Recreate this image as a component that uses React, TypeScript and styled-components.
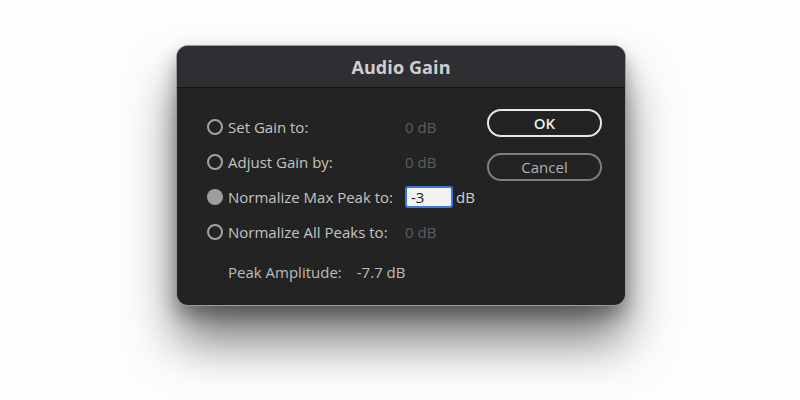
import React from "react";
import styled, { createGlobalStyle } from "styled-components";

const Global = createGlobalStyle`
  html, body { margin: 0; padding: 0; background: #ffffff; }
  body { width: 800px; height: 400px; overflow: hidden; font-family: "Open Sans", "Noto Sans", sans-serif; }
`;

const Page = styled.div`
  width: 800px;
  height: 400px;
  display: flex;
  justify-content: center;
  padding-top: 46px;
  box-sizing: border-box;
  background: #fdfdfd;
`;

const Dialog = styled.div`
  width: 448px;
  height: 259px;
  margin-left: 2px;
  border-radius: 11px;
  background: #232323;
  box-shadow: 0 0 0 1px #9a9a9a, 0 36px 50px rgba(0, 0, 0, 0.52), 0 10px 20px rgba(0, 0, 0, 0.35);
  overflow: hidden;
  display: flex;
  flex-direction: column;
`;

const TitleBar = styled.div`
  height: 41px;
  background: #2e2e33;
  border-bottom: 1px solid #141414;
  display: flex;
  align-items: center;
  justify-content: center;
  color: #cfcfcf;
  font-weight: 700;
  font-size: 18px;
  letter-spacing: 0.1px;
`;

const Body = styled.div`
  flex: 1;
  display: flex;
  justify-content: space-between;
  padding: 21px 23px 0 30px;
`;

const Form = styled.div`
  display: grid;
  grid-template-columns: 16px 172px auto;
  column-gap: 5px;
  grid-auto-rows: 35px;
  align-items: center;
`;

const Radio = styled.span<{ $checked?: boolean }>`
  width: 16px;
  height: 16px;
  box-sizing: border-box;
  border-radius: 50%;
  border: ${(p) => (p.$checked ? "none" : "2px solid #a2a2a2")};
  background: ${(p) => (p.$checked ? "#9d9d9d" : "transparent")};
`;

const Label = styled.span`
  color: #c3c3c3;
  font-size: 15px;
  white-space: nowrap;
`;

const Value = styled.span<{ $disabled?: boolean }>`
  color: ${(p) => (p.$disabled ? "#5e5e5e" : "#cfcfcf")};
  font-size: 15px;
  white-space: nowrap;
  display: flex;
  align-items: center;
  gap: 3px;
`;

const Input = styled.div`
  width: 48px;
  height: 22px;
  box-sizing: border-box;
  border: 2px solid #3b78e0;
  border-radius: 3px;
  background: #f2f2f2;
  color: #1a1a1a;
  font-size: 15px;
  padding-left: 4px;
  display: flex;
  align-items: center;
`;

const Peak = styled.div`
  grid-column: 2 / 4;
  display: flex;
  align-items: center;
  gap: 15px;
  margin-top: 10px;
  color: #bdbdbd;
  font-size: 15px;
`;

const Buttons = styled.div`
  display: flex;
  flex-direction: column;
  gap: 16px;
`;

const Button = styled.div<{ $primary?: boolean }>`
  width: 115px;
  height: 28px;
  box-sizing: border-box;
  border-radius: 14px;
  border: 2px solid ${(p) => (p.$primary ? "#e8e8e8" : "#7e7e7e")};
  color: ${(p) => (p.$primary ? "#ededed" : "#b0b0b0")};
  font-size: 15px;
  font-weight: ${(p) => (p.$primary ? 600 : 400)};
  display: flex;
  align-items: center;
  justify-content: center;
`;

const rows = [
  { label: "Set Gain to:", value: "0 dB" },
  { label: "Adjust Gain by:", value: "0 dB" },
  { label: "Normalize Max Peak to:", value: null },
  { label: "Normalize All Peaks to:", value: "0 dB" },
];

export default function App() {
  return (
    <>
      <Global />
      <Page>
        <Dialog>
          <TitleBar>Audio Gain</TitleBar>
          <Body>
            <Form>
              {rows.map((r) => (
                <React.Fragment key={r.label}>
                  <Radio $checked={r.value === null} />
                  <Label>{r.label}</Label>
                  {r.value === null ? (
                    <Value>
                      <Input>-3</Input>
                      dB
                    </Value>
                  ) : (
                    <Value $disabled>{r.value}</Value>
                  )}
                </React.Fragment>
              ))}
              <span />
              <Peak>
                <span>Peak Amplitude:</span>
                <span>-7.7 dB</span>
              </Peak>
            </Form>
            <Buttons>
              <Button $primary>OK</Button>
              <Button>Cancel</Button>
            </Buttons>
          </Body>
        </Dialog>
      </Page>
    </>
  );
}
